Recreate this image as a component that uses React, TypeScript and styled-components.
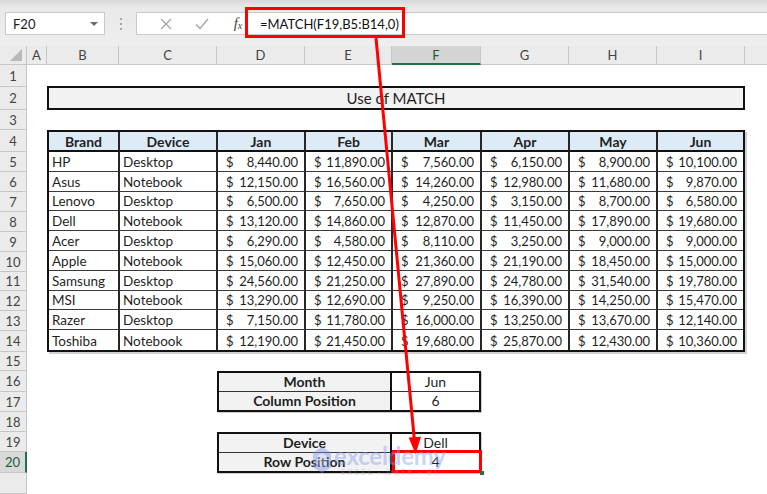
import styled, { createGlobalStyle } from "styled-components"

const GlobalStyle = createGlobalStyle`
  html, body {
    margin: 0;
    padding: 0;
    background: #ffffff;
  }
  body {
    font-family: Lato, "Open Sans", "Liberation Sans", sans-serif;
    color: #1f1f1f;
  }
`

const columns = ["A", "B", "C", "D", "E", "F", "G", "H", "I"]
const rowHeights = [22, 23, 20, 22, 20, 20, 20, 20, 20, 20, 19, 20, 20, 21, 19, 21, 20, 20, 20, 21, 21]
const months = ["Jan", "Feb", "Mar", "Apr", "May", "Jun"]

type Sale = [string, string, number[]]

const sales: Sale[] = [
    ["HP", "Desktop", [8440, 11890, 7560, 6150, 8900, 10100]],
    ["Asus", "Notebook", [12150, 16560, 14260, 12980, 11680, 9870]],
    ["Lenovo", "Desktop", [6500, 7650, 4250, 3150, 8700, 6580]],
    ["Dell", "Notebook", [13120, 14860, 12870, 11450, 17890, 19680]],
    ["Acer", "Desktop", [6290, 4580, 8110, 3250, 9000, 9000]],
    ["Apple", "Notebook", [15060, 12450, 21360, 21190, 18450, 15000]],
    ["Samsung", "Desktop", [24560, 21250, 27890, 24780, 31540, 19780]],
    ["MSI", "Notebook", [13290, 12690, 9250, 16390, 14250, 15470]],
    ["Razer", "Desktop", [7150, 11780, 16000, 13250, 13670, 12140]],
    ["Toshiba", "Notebook", [12190, 21450, 19680, 25870, 12430, 10360]],
]

const money = (n: number) =>
    n.toLocaleString("en-US", { minimumFractionDigits: 2, maximumFractionDigits: 2 })

export default function App() {
    return (
        <>
            <GlobalStyle />
            <Window>
                <FormulaBar>
                    <NameBox>
                        F20
                        <Caret />
                    </NameBox>
                    <Grip>
                        <i />
                        <i />
                        <i />
                    </Grip>
                    <FormulaInput>
                        <BarIcon>
                            <svg width="12" height="12" viewBox="0 0 12 12">
                                <path d="M1 1 L11 11 M11 1 L1 11" stroke="#a3a3a3" strokeWidth="1.3" fill="none" />
                            </svg>
                        </BarIcon>
                        <BarIcon>
                            <svg width="14" height="12" viewBox="0 0 14 12">
                                <path d="M1 6.5 L5 10.5 L13 1" stroke="#a3a3a3" strokeWidth="1.3" fill="none" />
                            </svg>
                        </BarIcon>
                        <FxIcon>
                            f<sub>x</sub>
                        </FxIcon>
                        <Formula>=MATCH(F19,B5:B14,0)</Formula>
                    </FormulaInput>
                    <Callout />
                </FormulaBar>

                <Sheet>
                    <Corner>
                        <svg width="12" height="12" viewBox="0 0 12 12">
                            <polygon points="12,0 12,12 0,12" fill="#b8b8b8" />
                        </svg>
                    </Corner>
                    {columns.map((c, i) => (
                        <ColHeader key={c} $col={i + 2} $active={c === "F"}>
                            {c}
                        </ColHeader>
                    ))}
                    <ColHeader $col={columns.length + 2} />
                    {rowHeights.map((_, i) => (
                        <RowHeader key={i} $row={i + 2} $active={i === 19}>
                            {i < 20 ? i + 1 : ""}
                        </RowHeader>
                    ))}

                    <Title>Use of MATCH</Title>

                    <DataTable>
                        <HeadCell>Brand</HeadCell>
                        <HeadCell>Device</HeadCell>
                        {months.map((m) => (
                            <HeadCell key={m}>{m}</HeadCell>
                        ))}
                        {sales.map(([brand, device, values]) => [
                            <TextCell key={brand + "-b"}>{brand}</TextCell>,
                            <TextCell key={brand + "-d"}>{device}</TextCell>,
                            ...values.map((v, j) => (
                                <MoneyCell key={brand + j}>
                                    <span>$</span>
                                    <span>{money(v)}</span>
                                </MoneyCell>
                            )),
                        ])}
                    </DataTable>

                    <Lookup $row={17}>
                        <LookupLabel>Month</LookupLabel>
                        <LookupValue>Jun</LookupValue>
                        <LookupLabel>Column Position</LookupLabel>
                        <LookupValue>6</LookupValue>
                    </Lookup>

                    <Lookup $row={20}>
                        <LookupLabel>Device</LookupLabel>
                        <LookupValue>Dell</LookupValue>
                        <LookupLabel>Row Position</LookupLabel>
                        <LookupValue>4</LookupValue>
                    </Lookup>

                    <Selection />
                </Sheet>

                <Watermark>
                    <svg width="20" height="28" viewBox="0 0 20 28">
                        <polygon points="10,1 19,6.5 19,21.5 10,27 1,21.5 1,6.5" fill="#7f95e8" />
                        <polygon points="10,7 14.5,9.8 14.5,18.2 10,21 5.5,18.2 5.5,9.8" fill="#ffffff" opacity="0.55" />
                    </svg>
                    <Brandmark>
                        <strong>exceldemy</strong>
                        <small>EXCEL · DATA · BI</small>
                    </Brandmark>
                </Watermark>

                <Arrow width="767" height="494" viewBox="0 0 767 494">
                    <line x1="376" y1="38" x2="414.4" y2="440" stroke="#ff0000" strokeWidth="3" />
                    <polygon points="415.6,454 408.6,437.5 421,436.8" fill="#ff0000" />
                </Arrow>
            </Window>
        </>
    )
}

const Window = styled.div`
    position: relative;
    width: 767px;
    height: 494px;
    overflow: hidden;
    display: flex;
    flex-direction: column;
    background: #ffffff;
`

const FormulaBar = styled.div`
    position: relative;
    height: 46px;
    flex: none;
    box-sizing: border-box;
    display: flex;
    align-items: flex-start;
    padding: 12px 0 0 5px;
    background: linear-gradient(#d8d8d8 0, #e9e9e9 7px, #eeeeee 100%);
`

const NameBox = styled.div`
    width: 100px;
    height: 23px;
    box-sizing: border-box;
    display: flex;
    align-items: center;
    justify-content: space-between;
    padding: 0 6px 0 7px;
    background: #ffffff;
    border: 1px solid #c9c9c9;
    font-size: 13px;
    color: #222;
`

const Caret = styled.span`
    width: 0;
    height: 0;
    border-left: 4px solid transparent;
    border-right: 4px solid transparent;
    border-top: 4px solid #6a6a6a;
`

const Grip = styled.div`
    width: 31px;
    height: 23px;
    display: flex;
    flex-direction: column;
    align-items: center;
    justify-content: center;
    gap: 3px;

    i {
        width: 2px;
        height: 2px;
        background: #a8a8a8;
    }
`

const FormulaInput = styled.div`
    flex: 1;
    height: 23px;
    box-sizing: border-box;
    display: flex;
    align-items: center;
    padding-left: 11px;
    background: #ffffff;
    border: 1px solid #c9c9c9;
    border-right: none;
`

const BarIcon = styled.span`
    width: 36px;
    display: flex;
    justify-content: center;
`

const FxIcon = styled.span`
    width: 36px;
    text-align: center;
    font-family: "Liberation Serif", serif;
    font-style: italic;
    font-size: 15px;
    color: #444;

    sub {
        font-size: 10px;
        vertical-align: -1px;
    }
`

const Formula = styled.span`
    margin-left: 4px;
    font-size: 13px;
    color: #111;
`

const Callout = styled.div`
    position: absolute;
    left: 245px;
    top: 7px;
    width: 160px;
    height: 31px;
    box-sizing: border-box;
    border: 3px solid #ff0000;
`

const Sheet = styled.div`
    flex: 1;
    display: grid;
    grid-template-columns: 27px 20px 72px 98px 88px 87px 89px 88px 88px 88px 88px;
    grid-template-rows: 19px ${rowHeights.map((h) => h + "px").join(" ")};
    overflow: hidden;
    background: #ffffff;
`

const HeaderBase = styled.div`
    box-sizing: border-box;
    display: flex;
    align-items: center;
    justify-content: center;
    background: #ebebeb;
    font-size: 13px;
    color: #444;
`

const Corner = styled(HeaderBase)`
    grid-column: 1;
    grid-row: 1;
    align-items: flex-end;
    justify-content: flex-end;
    padding: 0 4px 3px 0;
    border-right: 1px solid #c6c6c6;
    border-bottom: 1px solid #c6c6c6;
`

const ColHeader = styled(HeaderBase)<{ $col: number; $active?: boolean }>`
    grid-column: ${(p) => p.$col};
    grid-row: 1;
    border-right: 1px solid #c6c6c6;
    border-bottom: ${(p) => (p.$active ? "2px solid #217346" : "1px solid #c6c6c6")};
    background: ${(p) => (p.$active ? "#d4d4d4" : "#ebebeb")};
    color: ${(p) => (p.$active ? "#1d5e3a" : "#444")};
`

const RowHeader = styled(HeaderBase)<{ $row: number; $active?: boolean }>`
    grid-column: 1;
    grid-row: ${(p) => p.$row};
    border-bottom: 1px solid #c6c6c6;
    border-right: ${(p) => (p.$active ? "2px solid #217346" : "1px solid #c6c6c6")};
    background: ${(p) => (p.$active ? "#d9d9d9" : "#ebebeb")};
    color: ${(p) => (p.$active ? "#1d5e3a" : "#444")};
`

const Title = styled.div`
    grid-column: 3 / 11;
    grid-row: 3;
    margin: -1px 0 0;
    display: flex;
    align-items: center;
    justify-content: center;
    background: #f2f2f2;
    border: 2px solid #111;
    font-size: 15px;
    color: #1f1f1f;
`

const DataTable = styled.div`
    grid-column: 3 / 11;
    grid-row: 5 / 16;
    display: grid;
    grid-template-columns: 71px 98px 88px 87px 89px 88px 88px 1fr;
    grid-template-rows: 20px repeat(10, 1fr);
    border: 2px solid #111;
    box-shadow: 2px 2px 0 rgba(0, 0, 0, 0.18);
    font-size: 13px;

    & > * {
        box-sizing: border-box;
        border-right: 2px solid #262626;
        border-bottom: 1px solid #3a3a3a;
    }
    & > *:nth-child(8n) {
        border-right: none;
    }
    & > *:nth-last-child(-n + 8) {
        border-bottom: none;
    }
`

const HeadCell = styled.div`
    display: flex;
    align-items: center;
    justify-content: center;
    background: #ddebf7;
    font-weight: 700;
    font-size: 14px;
    border-bottom: 2px solid #111 !important;
`

const TextCell = styled.div`
    display: flex;
    align-items: center;
    padding: 1px 0 0 3px;
    font-size: 13.5px;
`

const MoneyCell = styled.div`
    display: flex;
    align-items: center;
    justify-content: space-between;
    padding: 1px 6px 0 8px;
`

const Lookup = styled.div<{ $row: number }>`
    grid-column: 5 / 8;
    grid-row: ${(p) => `${p.$row} / ${p.$row + 2}`};
    display: grid;
    grid-template-columns: 1fr 87px;
    grid-template-rows: 1fr 1fr;
    border: 2px solid #111;
    box-shadow: 1px 1px 0 rgba(0, 0, 0, 0.2);
    font-size: 14px;

    & > *:nth-child(-n + 2) {
        border-bottom: 1px solid #333;
    }
`

const LookupLabel = styled.div`
    box-sizing: border-box;
    display: flex;
    align-items: center;
    justify-content: center;
    background: #f2f2f2;
    font-weight: 700;
    border-right: 2px solid #111;
`

const LookupValue = styled.div`
    box-sizing: border-box;
    display: flex;
    align-items: center;
    justify-content: center;
    background: #ffffff;
`

const Selection = styled.div`
    position: relative;
    z-index: 2;
    grid-column: 7;
    grid-row: 21;
    margin: -2px -1px 0 0;
    border: 3px solid #ff0000;

    &::after {
        content: "";
        position: absolute;
        right: -5px;
        bottom: -5px;
        width: 4px;
        height: 4px;
        background: #217346;
    }
`

const Watermark = styled.div`
    position: absolute;
    left: 312px;
    top: 444px;
    display: flex;
    align-items: center;
    gap: 2px;
    opacity: 0.45;
    pointer-events: none;
    z-index: 3;
`

const Brandmark = styled.div`
    display: flex;
    flex-direction: column;
    align-items: center;
    line-height: 1;

    strong {
        font-size: 24px;
        font-weight: 700;
        color: #8a9ff0;
        letter-spacing: -0.2px;
    }
    small {
        margin-top: 1px;
        font-size: 7px;
        letter-spacing: 2.5px;
        color: #9aa3b8;
    }
`

const Arrow = styled.svg`
    position: absolute;
    left: 0;
    top: 0;
    pointer-events: none;
    z-index: 4;
`
